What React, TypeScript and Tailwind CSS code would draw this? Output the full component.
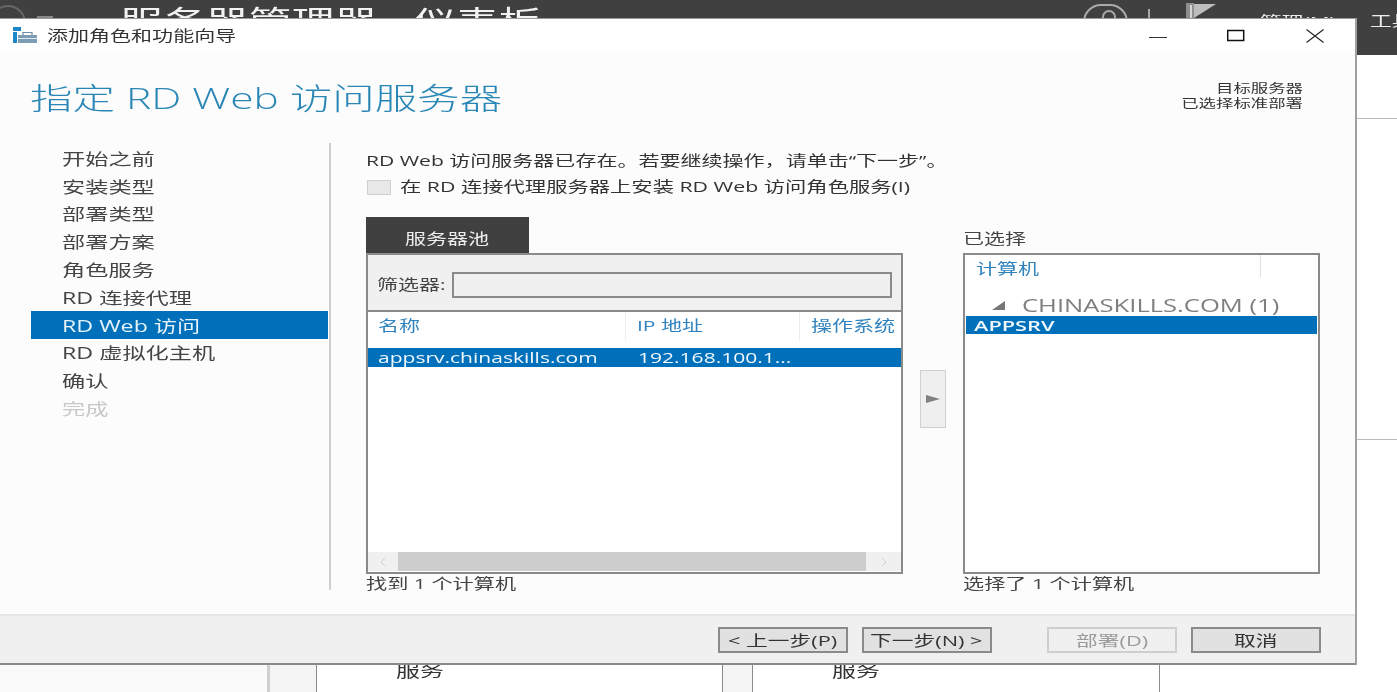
import React from "react";

// the reference is stretched sideways, so text is widened with scale-x
const Txt = ({ className = "", children }: { className?: string; children: React.ReactNode }) => (
  <span className={`inline-block origin-left scale-x-[1.45] whitespace-nowrap ${className}`}>{children}</span>
);

const steps = ["开始之前", "安装类型", "部署类型", "部署方案", "角色服务", "RD 连接代理", "RD Web 访问", "RD 虚拟化主机", "确认", "完成"];

const WizardIcon = () => (
  <svg width="24" height="17" viewBox="0 0 24 17" className="shrink-0 -mt-[2px]">
    <rect x="0" y="0" width="8" height="4" fill="#1b87c9" />
    <rect x="0" y="5" width="4" height="11" fill="#1b87c9" />
    <path d="M10 8V5.5h9V8" fill="none" stroke="#6d8ea3" strokeWidth="1.2" />
    <rect x="5" y="8" width="19" height="8" fill="#7d9db5" />
    <rect x="5" y="11" width="19" height="1" fill="#dfe9f0" />
  </svg>
);

const WindowButtons = () => (
  <div className="flex items-center ml-auto">
    <svg width="18" height="14" viewBox="0 0 18 14" className="mr-[60px]">
      <path d="M0 8.5h18" stroke="#333" strokeWidth="1" />
    </svg>
    <svg width="18" height="14" viewBox="0 0 18 14" className="mr-[61px]">
      <rect x="0.7" y="1.5" width="16" height="10" fill="none" stroke="#111" strokeWidth="1.5" />
    </svg>
    <svg width="18" height="14" viewBox="0 0 18 14" className="mr-[31px]">
      <path d="M0.5 0.5l17 13M17.5 0.5l-17 13" stroke="#222" strokeWidth="1.1" />
    </svg>
  </div>
);

const TopBar = () => (
  <div className="h-[55px] bg-[#404040] flex overflow-hidden text-white shrink-0">
    <div className="w-[36px] h-[36px] rounded-full border-2 border-[#666] -ml-[10px] mt-[5px] shrink-0" />
    <div className="w-[16px] h-[2px] bg-[#888] mt-[16px] ml-[11px] mr-[67px] shrink-0" />
    <div className="h-[40px] pt-[1px] text-[29.6px] leading-[40px] text-[#f2f2f2]">
      <Txt>服务器管理器 › 仪表板</Txt>
    </div>
    <div className="ml-auto flex items-start relative">
      <div className="w-[45px] h-[36px] rounded-full border-2 border-[#aaa] mt-[4px] mr-[20px] flex justify-center pt-[4px]">
        <div className="w-[14px] h-[14px] rounded-full border-2 border-[#aaa] ml-[6px]" />
      </div>
      <div className="w-[2px] h-[18px] bg-[#aaa] mt-[9px] mr-[36px]" />
      <svg width="30" height="16" viewBox="0 0 30 16" className="mr-[44px] mt-[3px]">
        <rect x="0" y="0" width="8" height="16" fill="#8f8f8f" />
        <rect x="4" y="2" width="2" height="14" fill="#d6d6d6" />
        <path d="M8 1h22L8 15z" fill="#bdbdbd" />
      </svg>
      <div className="text-[15px] leading-[20px] text-[#eee] mt-[11px] w-[110px]"><Txt>管理(M)</Txt></div>
      <div className="text-[15px] leading-[20px] text-[#eee] mt-[10px] w-[27px] overflow-hidden"><Txt>工具</Txt></div>
    </div>
  </div>
);

const Background = () => (
  <div className="absolute inset-0 flex flex-col bg-white">
    <TopBar />
    <div className="flex-1 flex">
      <div className="w-[267px] bg-[#fafafa] border-r-[3px] border-[#d0d0d0] box-content" />
      <div className="w-[47px] bg-[#f5f5f5] border-r border-[#8a8a8a]" />
      <div className="w-[406px] bg-white border-r border-[#8a8a8a] flex items-end justify-start pl-[79px] pb-[8px] text-[#333] text-[16.5px]">
        <Txt>服务</Txt>
      </div>
      <div className="w-[30px] bg-[#f5f5f5] border-r border-[#8a8a8a]" />
      <div className="w-[407px] bg-white border-r border-[#8a8a8a] flex items-end justify-start pl-[79px] pb-[8px] text-[#333] text-[16.5px]">
        <Txt>服务</Txt>
      </div>
      <div className="flex-1 bg-white">
        <div className="h-[64px] border-b border-[#bbb]" />
        <div className="h-[321px] border-b border-[#bbb]" />
      </div>
    </div>
  </div>
);

const Sidebar = () => (
  <div className="w-[331px] shrink-0 pl-[31px] border-r-2 border-[#cfcfcf] h-[447px] mt-[-1px]">
    <div className="w-[297px] flex flex-col pt-[1px]">
      {steps.map((s, i) => (
        <div
          key={s}
          className={`h-[27.8px] pl-[31px] pt-[2px] flex items-center text-[16px] ${
            i === 6 ? "bg-[#0070bb] text-[#e6f3fb]" : i === 9 ? "text-[#c8c8c8]" : "text-[#444]"
          }`}
        >
          <Txt>{s}</Txt>
        </div>
      ))}
    </div>
  </div>
);

const ServerPool = () => (
  <div className="w-[537px] shrink-0 pt-[1px]">
    <div className="w-[163px] h-[37px] bg-[#404040] text-[#eee] text-[14.5px] pl-[39px] pt-[11px] leading-[22px]">
      <Txt>服务器池</Txt>
    </div>
    <div className="h-[321px] border-2 border-[#8a8a8a] bg-white flex flex-col -mt-[1px]">
      <div className="h-[57px] bg-[#f0f0f0] border-b-2 border-[#8a8a8a] flex items-center pl-[9px] pr-[9px] pt-[5px] shrink-0">
        <span className="w-[75px] text-[14.5px] text-[#444]"><Txt>筛选器:</Txt></span>
        <div className="flex-1 h-[26px] border-2 border-[#8a8a8a] bg-[#f0f0f0]" />
      </div>
      <div className="h-[28px] flex items-center text-[14.5px] text-[#2f82bd] shrink-0">
        <div className="w-[258px] h-full pl-[10px] flex items-center border-r border-[#ececec]"><Txt>名称</Txt></div>
        <div className="w-[174px] h-full pl-[11px] flex items-center border-r border-[#ececec]"><Txt>IP 地址</Txt></div>
        <div className="pl-[11px]"><Txt>操作系统</Txt></div>
      </div>
      <div className="h-[19px] mt-[8px] bg-[#0070bb] flex items-center text-[#f0f8fd] text-[14.5px] shrink-0">
        <div className="w-[270px] pl-[10px]"><Txt>appsrv.chinaskills.com</Txt></div>
        <Txt>192.168.100.1...</Txt>
      </div>
      <div className="flex-1" />
      <div className="h-[19px] flex shrink-0 bg-[#f0f0f0] mb-[1px]">
        <div className="w-[30px] flex items-center justify-center">
          <svg width="8" height="10" viewBox="0 0 8 10"><path d="M6 1L2 5l4 4" fill="none" stroke="#d0d0d0" strokeWidth="1" /></svg>
        </div>
        <div className="flex-1 bg-[#cdcdcd]" />
        <div className="w-[35px] flex items-center justify-center">
          <svg width="8" height="10" viewBox="0 0 8 10"><path d="M2 1l4 4-4 4" fill="none" stroke="#d0d0d0" strokeWidth="1" /></svg>
        </div>
      </div>
    </div>
    <div className="text-[14.6px] text-[#444] leading-[18px]"><Txt>找到 1 个计算机</Txt></div>
  </div>
);

const Selected = () => (
  <div className="w-[357px] shrink-0">
    <div className="h-[37px] flex items-end pb-[4px] text-[14.5px] text-[#444] leading-[20px]"><Txt>已选择</Txt></div>
    <div className="h-[321px] border-2 border-[#8a8a8a] bg-white relative">
      <div className="h-[28px] pl-[11px] pt-[2px] text-[14.5px] leading-[24px] text-[#2f82bd] relative">
        <Txt>计算机</Txt>
        <div className="absolute left-[295px] top-0 w-px h-[22px] bg-[#e0e0e0]" />
      </div>
      <div className="h-[33px] flex items-center pl-[27px] pt-[11px] text-[#7f7f7f] text-[17.65px]">
        <svg width="13" height="9" viewBox="0 0 13 9" className="mr-[17px]"><path d="M13 0v9H0z" fill="#777" /></svg>
        <Txt>CHINASKILLS.COM (1)</Txt>
      </div>
      <div className="mx-[1px] h-[18px] bg-[#0070bb] pl-[8px] flex items-center text-[15px] font-semibold text-[#f0f8fd]">
        <Txt>APPSRV</Txt>
      </div>
    </div>
    <div className="text-[14.6px] text-[#444] leading-[18px]"><Txt>选择了 1 个计算机</Txt></div>
  </div>
);

const Btn = ({ label, disabled, pad }: { label: string; disabled?: boolean; pad: string }) => (
  <div
    className={`w-[130px] h-[26px] border-2 text-[15px] leading-[22px] ${pad} ${
      disabled ? "border-[#cfcfcf] bg-[#f0f0f0] text-[#9a9a9a]" : "border-[#8a8a8a] bg-[#e1e1e1] text-[#333]"
    }`}
  >
    <Txt>{label}</Txt>
  </div>
);

const Footer = () => (
  <div className="h-[51px] bg-[#f0f0f0] border-t-2 border-[#e6e6e6] border-b-2 border-b-[#8a8a8a] flex items-center pl-[718px]">
    <Btn label="< 上一步(P)" pad="pl-[8px]" />
    <div className="w-[14px]" />
    <Btn label="下一步(N) >" pad="pl-[6px]" />
    <div className="w-[55px]" />
    <Btn label="部署(D)" disabled pad="pl-[27px]" />
    <div className="w-[14px]" />
    <Btn label="取消" pad="pl-[41px]" />
  </div>
);

const Dialog = () => (
  <div className="absolute left-0 top-[18px] w-[1357px] h-[647px] bg-[#fcfcfc] border-r-2 border-[#a0a0a0] border-t border-t-[#999] flex flex-col">
    <div className="h-[34px] bg-white flex items-center pl-[13px] shrink-0">
      <WizardIcon />
      <div className="ml-[10px] -mt-[1px] text-[14.5px] text-[#333]"><Txt>添加角色和功能向导</Txt></div>
      <WindowButtons />
    </div>
    <div className="h-[91px] flex shrink-0 relative">
      <div className="pl-[30px] pt-[22px] text-[29.3px] leading-[46px] font-light text-[#2a87b5]"><Txt>指定 RD Web 访问服务器</Txt></div>
      <div className="ml-auto pr-[52px] pt-[28px] text-right text-[12px] leading-[15px] text-[#333]">
        <div><Txt className="origin-right">目标服务器</Txt></div>
        <div><Txt className="origin-right">已选择标准部署</Txt></div>
      </div>
    </div>
    <div className="flex-1 flex">
      <Sidebar />
      <div className="pl-[35px] flex-1">
        <div className="h-[34px] pt-[6px] text-[14.5px] leading-[22px] text-[#333]">
          <Txt>RD Web 访问服务器已存在。若要继续操作，请单击“下一步”。</Txt>
        </div>
        <div className="h-[38px] flex items-start pl-[1px]">
          <div className="w-[24px] h-[15px] mt-[2px] mr-[9px] bg-[#e8e8e8] border border-[#cfcfcf]" />
          <div className="text-[14.7px] leading-[16px] text-[#333]"><Txt>在 RD 连接代理服务器上安装 RD Web 访问角色服务(I)</Txt></div>
        </div>
        <div className="flex">
          <ServerPool />
          <div className="w-[61px] shrink-0 pl-[17px] pt-[154px]">
            <div className="w-[26px] h-[58px] bg-[#efefef] border border-[#cfcfcf] flex items-center justify-center">
              <svg width="14" height="8" viewBox="0 0 14 8"><path d="M0 0l14 4-14 4z" fill="#808080" /></svg>
            </div>
          </div>
          <div className="-ml-[1px]">
            <Selected />
          </div>
        </div>
      </div>
    </div>
    <Footer />
  </div>
);

export default function App() {
  return (
    <div className="relative w-[1397px] h-[692px] overflow-hidden blur-[0.4px] font-['Open_Sans','Noto_Sans_CJK_SC',sans-serif]">
      <Background />
      <Dialog />
    </div>
  );
}
